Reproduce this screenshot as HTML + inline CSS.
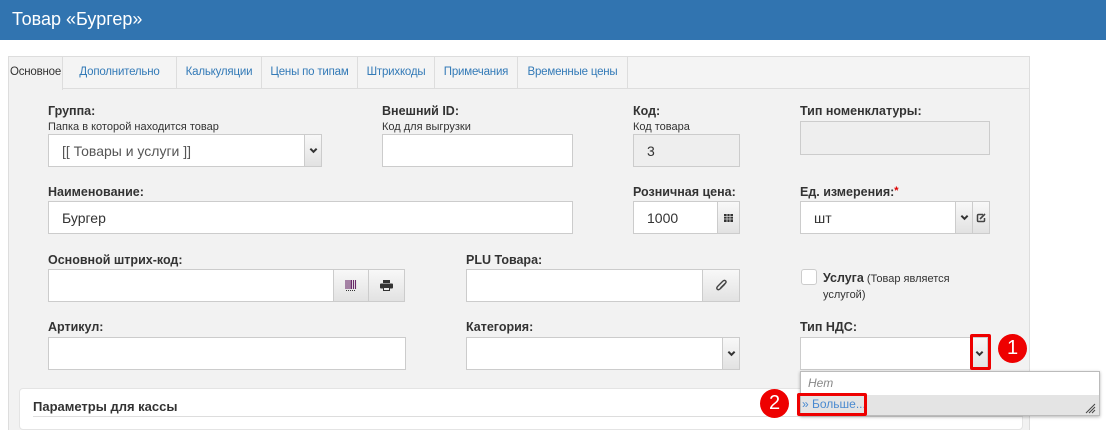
<!DOCTYPE html>
<html><head><meta charset="utf-8"><style>
*{box-sizing:border-box;margin:0;padding:0}
body{width:1106px;height:430px;overflow:hidden;background:#fff;font-family:"Liberation Sans",Arial,sans-serif;font-size:13px;color:#333;position:relative}
.abs{position:absolute}
.hdr{left:0;top:0;width:1106px;height:40px;background:#3174b0;color:#fff;font-size:18px;padding:9px 0 0 12px}
.panel{left:8px;top:88px;width:1022px;height:342px;background:#f2f2f2;border:1px solid #ddd;border-bottom:none}
.tabs{left:8px;top:56px;width:1022px;height:33px;border:1px solid #ddd;border-bottom:none;background:#f4f4f4}
.tab{top:57px;height:32px;border-right:1px solid #ddd;color:#337ab7;font-size:11.5px;padding:9px 0 0;text-align:center;background:#f4f4f4;white-space:nowrap;letter-spacing:-0.2px}
.tab.act{color:#333;background:#f2f2f2}
.lbl{font-weight:bold;font-size:12.5px;color:#333}
.sub{font-size:11px;color:#333}
.inp{background:#fff;border:1px solid #ccc;height:33px}
.btn{background:linear-gradient(#f8f8f8,#e2e2e2);border:1px solid #ccc;height:33px;display:flex;align-items:center;justify-content:center;font-size:10px;color:#333}
.val{font-size:14px;color:#333;padding:8px 0 0 13px}
</style></head><body>
<svg width="0" height="0" style="position:absolute"><defs><symbol id="chv" viewBox="0 0 10 10"><path d="M1.5 3 L5 6.5 L8.5 3" fill="none" stroke="#333" stroke-width="2.2"/></symbol></defs></svg>
<div class="abs hdr">Товар «Бургер»</div>
<div class="abs tabs"></div>
<div class="abs panel"></div>
<div class="abs tab act" style="left:9px;width:54px;height:33px">Основное</div>
<div class="abs tab" style="left:63px;width:114px;border-bottom:1px solid #ddd">Дополнительно</div>
<div class="abs tab" style="left:177px;width:85px;border-bottom:1px solid #ddd">Калькуляции</div>
<div class="abs tab" style="left:262px;width:96px;border-bottom:1px solid #ddd">Цены по типам</div>
<div class="abs tab" style="left:358px;width:77px;border-bottom:1px solid #ddd">Штрихкоды</div>
<div class="abs tab" style="left:435px;width:83px;border-bottom:1px solid #ddd">Примечания</div>
<div class="abs tab" style="left:518px;width:110px;border-bottom:1px solid #ddd">Временные цены</div>
<div class="abs" style="left:628px;top:88px;width:401px;height:1px;background:#ddd"></div>

<div class="abs lbl" style="left:48px;top:104px">Группа:</div>
<div class="abs sub" style="left:48px;top:121px">Папка в которой находится товар</div>
<div class="abs inp val" style="left:48px;top:134px;width:257px;color:#555">[[ Товары и услуги ]]</div>
<div class="abs btn" style="left:304px;top:134px;width:18px"><svg width="9" height="9"><use href="#chv"/></svg></div>

<div class="abs lbl" style="left:382px;top:104px">Внешний ID:</div>
<div class="abs sub" style="left:382px;top:121px">Код для выгрузки</div>
<div class="abs inp" style="left:382px;top:134px;width:191px"></div>

<div class="abs lbl" style="left:633px;top:104px">Код:</div>
<div class="abs sub" style="left:633px;top:121px">Код товара</div>
<div class="abs inp val" style="left:633px;top:134px;width:107px;background:#eee">3</div>

<div class="abs lbl" style="left:800px;top:104px">Тип номенклатуры:</div>
<div class="abs inp" style="left:800px;top:121px;width:190px;height:34px;background:#eee"></div>

<div class="abs lbl" style="left:48px;top:185px">Наименование:</div>
<div class="abs inp val" style="left:48px;top:201px;width:525px">Бургер</div>

<div class="abs lbl" style="left:633px;top:185px">Розничная цена:</div>
<div class="abs inp val" style="left:633px;top:201px;width:85px">1000</div>
<div class="abs btn" style="left:717px;top:201px;width:23px"><svg width="9" height="8"><rect width="9" height="8" fill="#333"/><path d="M0 2.5H9M0 5H9M3 0V8M6 0V8" stroke="#ddd" stroke-width="0.8"/></svg></div>

<div class="abs lbl" style="left:800px;top:185px">Ед. измерения:<span style="color:#d00;vertical-align:top;font-size:11px">*</span></div>
<div class="abs inp val" style="left:800px;top:201px;width:156px">шт</div>
<div class="abs btn" style="left:955px;top:201px;width:18px"><svg width="9" height="9"><use href="#chv"/></svg></div>
<div class="abs btn" style="left:972px;top:201px;width:18px"><svg width="10" height="10"><path d="M7 1.5H2.5Q1.5 1.5 1.5 2.5V7.5Q1.5 8.5 2.5 8.5H7.5Q8.5 8.5 8.5 7.5V5" fill="none" stroke="#444" stroke-width="1.5"/><path d="M4 6L9 1" stroke="#444" stroke-width="1.6"/></svg></div>

<div class="abs lbl" style="left:48px;top:253px">Основной штрих-код:</div>
<div class="abs inp" style="left:48px;top:269px;width:286px"></div>
<div class="abs btn" style="left:333px;top:269px;width:36px"><svg width="12" height="11"><path d="M1 0V9M3 0V9M5 0V9M6.5 0V9M8.5 0V9M10.5 0V9" stroke="#6a2a6a" stroke-width="1.1"/><path d="M1 10.5H11" stroke="#333" stroke-dasharray="1 1"/></svg></div>
<div class="abs btn" style="left:368px;top:269px;width:37px"><svg width="13" height="11"><rect x="3" y="0" width="7" height="3" fill="#333"/><rect x="0" y="3.5" width="13" height="5" rx="1" fill="#333"/><rect x="3" y="7" width="7" height="4" fill="#333"/><rect x="4" y="8" width="5" height="2" fill="#eee"/></svg></div>

<div class="abs lbl" style="left:466px;top:253px">PLU Товара:</div>
<div class="abs inp" style="left:466px;top:269px;width:237px"></div>
<div class="abs btn" style="left:702px;top:269px;width:38px"><svg width="13" height="13"><path d="M10 5L5.5 9.5Q3.5 11.5 2.3 10.3Q1 9 3 7L8 2Q9.5 0.8 10.6 1.9Q11.7 3 10.3 4.3L5.5 9" fill="none" stroke="#444" stroke-width="1.4"/></svg></div>

<div class="abs" style="left:801px;top:269px;width:16px;height:16px;border:1px solid #ccc;border-radius:3px;background:#fff"></div>
<div class="abs" style="left:823px;top:270px;font-size:11px;line-height:16px;width:140px"><b style="font-size:12.5px">Услуга</b> (Товар является услугой)</div>

<div class="abs lbl" style="left:48px;top:320px">Артикул:</div>
<div class="abs inp" style="left:48px;top:337px;width:358px"></div>

<div class="abs lbl" style="left:466px;top:320px">Категория:</div>
<div class="abs inp" style="left:466px;top:337px;width:257px"></div>
<div class="abs btn" style="left:722px;top:337px;width:18px"><svg width="9" height="9"><use href="#chv"/></svg></div>

<div class="abs lbl" style="left:800px;top:320px">Тип НДС:</div>
<div class="abs inp" style="left:800px;top:337px;width:171px"></div>
<div class="abs btn" style="left:970px;top:337px;width:18px"><svg width="9" height="9"><use href="#chv"/></svg></div>
<div class="abs" style="left:970px;top:334px;width:21px;height:36px;border:3px solid #e00;border-radius:2px"></div>
<div class="abs" style="left:998px;top:334px;width:29px;height:29px;border-radius:50%;background:#e00;color:#fff;font-size:20px;text-align:center;line-height:29px">1</div>

<div class="abs" style="left:19px;top:388px;width:1004px;height:42px;background:#fff;border:1px solid #e4e4e4;border-radius:4px"></div>
<div class="abs lbl" style="left:33px;top:399px;font-size:13px">Параметры для кассы</div>
<div class="abs" style="left:33px;top:416px;width:990px;height:1px;background:#ddd"></div>

<div class="abs" style="left:800px;top:371px;width:300px;height:45px;background:#fff;border:1px solid #bbb;box-shadow:0 1px 3px rgba(0,0,0,.3)"></div>
<div class="abs" style="left:808px;top:376px;font-size:12px;color:#888;font-style:italic">Нет</div>
<div class="abs" style="left:801px;top:395px;width:298px;height:20px;background:#e4e4e4"></div>
<div class="abs" style="left:802px;top:397px;font-size:12px;color:#4a8ad0">» Больше...</div>
<svg class="abs" style="left:1085px;top:403px" width="11" height="11"><path d="M1 10L10 1M4 10L10 4M7 10L10 7" stroke="#444" stroke-width="1"/></svg>
<div class="abs" style="left:797px;top:393px;width:70px;height:23px;border:3px solid #e00;border-radius:2px"></div>
<div class="abs" style="left:760px;top:389px;width:29px;height:29px;border-radius:50%;background:#e00;color:#fff;font-size:20px;text-align:center;line-height:29px">2</div>
</body></html>
